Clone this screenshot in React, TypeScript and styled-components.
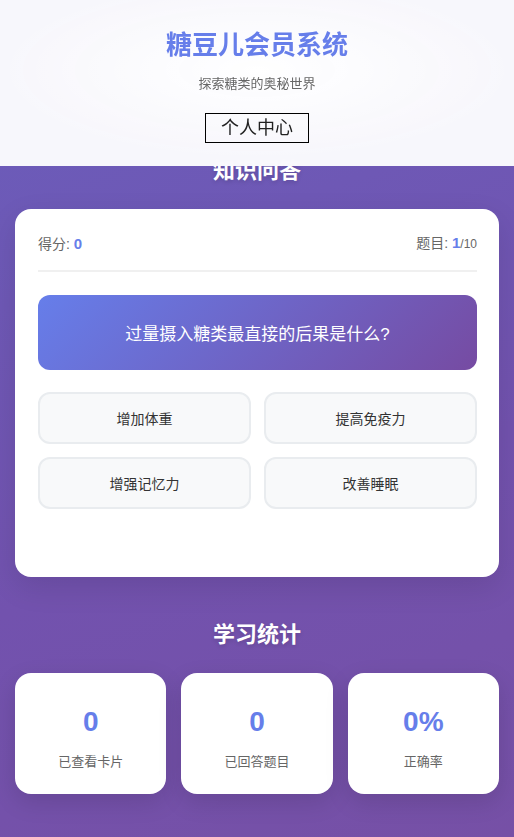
import React from 'react';
import styled, { createGlobalStyle } from 'styled-components';

const GlobalStyle = createGlobalStyle`
  * { box-sizing: border-box; }
  html, body { margin: 0; padding: 0; }
  body {
    font-family: "Liberation Sans", "Noto Sans CJK SC", sans-serif;
    background: linear-gradient(160deg, #6a5ebc 0%, #7252ae 60%, #7650a6 100%);
    min-height: 100vh;
  }
`;

const options = ['增加体重', '提高免疫力', '增强记忆力', '改善睡眠'];

const stats = [
  { value: '0', label: '已查看卡片' },
  { value: '0', label: '已回答题目' },
  { value: '0%', label: '正确率' },
];

export default function App() {
  return (
    <>
      <GlobalStyle />
      <Header>
        <Logo>糖豆儿会员系统</Logo>
        <Tagline>探索糖类的奥秘世界</Tagline>
        <ProfileButton>个人中心</ProfileButton>
      </Header>
      <Main>
        <SectionTitle>知识问答</SectionTitle>
        <QuizCard>
          <QuizInfo>
            <span>
              得分: <Strong>0</Strong>
            </span>
            <span>
              题目: <Strong>1</Strong>
              <Total>/10</Total>
            </span>
          </QuizInfo>
          <Question>过量摄入糖类最直接的后果是什么?</Question>
          <Options>
            {options.map((o) => (
              <Option key={o}>{o}</Option>
            ))}
          </Options>
          <Feedback />
        </QuizCard>

        <SectionTitle $spaced>学习统计</SectionTitle>
        <StatsGrid>
          {stats.map((s) => (
            <StatCard key={s.label}>
              <StatValue>{s.value}</StatValue>
              <StatLabel>{s.label}</StatLabel>
            </StatCard>
          ))}
        </StatsGrid>
      </Main>
    </>
  );
}

const Header = styled.header`
  position: fixed;
  top: 0;
  left: 0;
  right: 0;
  height: 166px;
  z-index: 10;
  display: flex;
  flex-direction: column;
  align-items: center;
  padding-top: 29px;
  background:
    radial-gradient(ellipse 260px 90px at 257px 70px, #ffffff, rgba(255, 255, 255, 0) 100%),
    rgba(250, 250, 253, 0.98);
  backdrop-filter: blur(10px);
`;

const Logo = styled.h1`
  margin: 0;
  font-size: 26px;
  line-height: 32px;
  font-weight: 700;
  color: #667eea;
`;

const Tagline = styled.p`
  margin: 14px 0 0;
  font-size: 13px;
  line-height: 18px;
  color: #666;
`;

const ProfileButton = styled.button`
  margin-top: 20px;
  height: 30px;
  padding: 0 15px;
  font-family: inherit;
  font-size: 18px;
  line-height: 26px;
  color: #222;
  background: transparent;
  border: 1px solid #000;
  border-radius: 0;
`;

const Main = styled.main`
  padding: 156px 15px 40px;
`;

const SectionTitle = styled.h2<{ $spaced?: boolean }>`
  margin: ${(p) => (p.$spaced ? '43px' : '0')} 0 23px;
  text-align: center;
  font-size: 22px;
  line-height: 30px;
  font-weight: 700;
  color: #fff;
  text-shadow: 0 2px 4px rgba(0, 0, 0, 0.15);
`;

const QuizCard = styled.section`
  background: #fff;
  border-radius: 16px;
  padding: 25px 22px 23px 23px;
  box-shadow: 0 10px 30px rgba(0, 0, 0, 0.1);
`;

const QuizInfo = styled.div`
  display: flex;
  justify-content: space-between;
  align-items: center;
  height: 38px;
  padding-bottom: 17px;
  border-bottom: 2px solid #f0f0f0;
  font-size: 14px;
  line-height: 20px;
  color: #666;
`;

const Strong = styled.strong`
  font-size: 15px;
  color: #667eea;
`;

const Total = styled.span`
  font-size: 12px;
`;

const Question = styled.div`
  margin-top: 23px;
  height: 75px;
  display: flex;
  align-items: center;
  justify-content: center;
  border-radius: 12px;
  background: linear-gradient(135deg, #667eea 0%, #764ba2 100%);
  color: #fff;
  font-size: 17px;
`;

const Options = styled.div`
  margin-top: 22px;
  display: grid;
  grid-template-columns: 1fr 1fr;
  gap: 13px;
`;

const Option = styled.button`
  height: 52px;
  font-family: inherit;
  font-size: 14px;
  color: #333;
  background: #f8f9fa;
  border: 2px solid #e9ecef;
  border-radius: 12px;
`;

const Feedback = styled.div`
  min-height: 45px;
`;

const StatsGrid = styled.div`
  display: grid;
  grid-template-columns: repeat(3, 1fr);
  gap: 15px;
`;

const StatCard = styled.div`
  height: 121px;
  padding-top: 32px;
  background: #fff;
  border-radius: 16px;
  text-align: center;
  box-shadow: 0 8px 24px rgba(0, 0, 0, 0.12);
`;

const StatValue = styled.div`
  font-size: 28px;
  line-height: 34px;
  font-weight: 700;
  color: #667eea;
`;

const StatLabel = styled.div`
  margin-top: 13px;
  font-size: 13px;
  line-height: 20px;
  color: #666;
`;
